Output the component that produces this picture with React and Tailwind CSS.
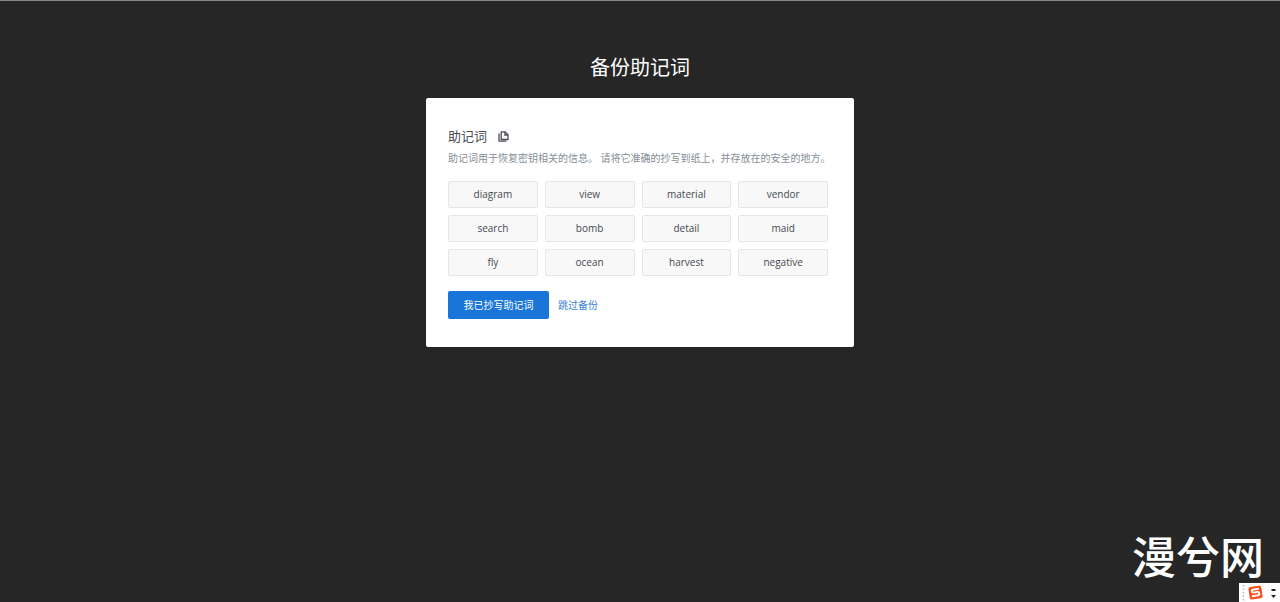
import React from "react";

const words = [
  "diagram", "view", "material", "vendor",
  "search", "bomb", "detail", "maid",
  "fly", "ocean", "harvest", "negative",
];

function CopyIcon() {
  return (
    <svg viewBox="0 0 11 11" className="w-[11px] h-[11px]" fill="none" stroke="currentColor" strokeWidth="1.3">
      <path d="M3.2 0.9h4.1L10 3.6v4.9H3.2z" strokeLinejoin="round" />
      <path d="M6.9 1v3H10" />
      <path d="M1 2.6v7.5h7.4" strokeLinejoin="round" />
    </svg>
  );
}

function InputMethodBar() {
  return (
    <div className="flex items-center w-[41px] h-[19px] bg-white text-[#333]">
      <svg viewBox="0 0 41 19" className="w-[41px] h-[19px]">
        <path d="M4.5 2v16" stroke="#bbb" strokeWidth="1.5" strokeDasharray="1.5 2" />
        <g transform="rotate(-9 16.5 9.5)">
          <rect x="10" y="3.3" width="13" height="12.6" rx="2.2" fill="#f4511e" />
          <path d="M20.4 6.3h-5.6c-2.3 0-2.3 3 0 3h3.6c2.3 0 2.3 3.4 0 3.4h-6" fill="none" stroke="#fff" strokeWidth="1.9" />
        </g>
        <path d="M32.5 6h4v2h-4zM32 12h5l-2.5 3z" fill="#222" />
      </svg>
    </div>
  );
}

export default function App() {
  return (
    <div className="relative min-h-screen bg-[#262626] border-t border-[#85898c] px-4 font-['Open_Sans','Noto_Sans_CJK_SC',sans-serif]">
      <main className="max-w-[428px] mx-auto pt-[51px] pb-16">
        <h1 className="text-xl leading-[30px] text-center text-white font-['Noto_Sans_CJK_SC',sans-serif]">备份助记词</h1>

        <section className="mt-4 rounded-[2px] bg-white pt-7 pb-7 pl-[22px] pr-[26px]">
          <div className="flex items-center gap-[11px] text-[#494e54]">
            <h2 className="text-[13px] leading-5">助记词</h2>
            <button type="button" aria-label="复制助记词">
              <CopyIcon />
            </button>
          </div>
          <p className="mt-[5px] text-[10px] leading-[14px] text-[#868e96] sm:whitespace-nowrap">
            助记词用于恢复密钥相关的信息。 请将它准确的抄写到纸上，并存放在的安全的地方。
          </p>

          <ul className="mt-4 grid grid-cols-4 gap-[7px]">
            {words.map((word) => (
              <li
                key={word}
                className="rounded-[2px] border border-[#e5e6e8] bg-[#f8f8f8] text-center text-[10px] leading-[25px] text-[#454a50]"
              >
                {word}
              </li>
            ))}
          </ul>

          <div className="mt-[15px] flex items-center gap-[9px] text-[10px] leading-7">
            <button type="button" className="w-[101px] rounded-[2px] bg-[#1976d8] text-white">
              我已抄写助记词
            </button>
            <a href="#skip" className="text-[#3b7fd4]">跳过备份</a>
          </div>
        </section>
      </main>

      <div className="absolute right-4 bottom-[17px] text-[44px] leading-[60px] font-medium text-white font-['Noto_Sans_CJK_SC',sans-serif]">
        漫兮网
      </div>
      <div className="absolute right-0 bottom-0">
        <InputMethodBar />
      </div>
    </div>
  );
}
